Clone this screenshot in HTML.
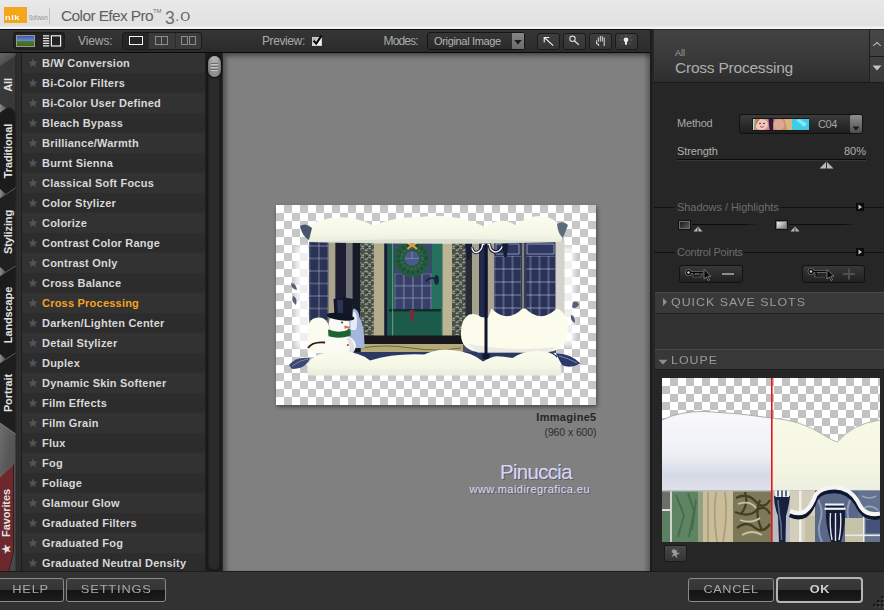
<!DOCTYPE html>
<html><head><meta charset="utf-8"><title>Color Efex Pro 3.0</title>
<style>
*{box-sizing:border-box;margin:0;padding:0}
html,body{width:884px;height:610px;overflow:hidden;background:#2b2b2b;font-family:"Liberation Sans",sans-serif;}
#app{position:relative;width:884px;height:610px;overflow:hidden;background:#2a2a2a}
.abs{position:absolute}
#title{left:0;top:0;width:884px;height:29px;background:linear-gradient(#e9e9e9,#e5e5e5 40%,#e1e1e1 88%,#f3f3f3 95%,#f3f3f3)}
#toolbar{left:0;top:29px;width:650px;height:24px;background:linear-gradient(#353535,#2b2b2b);border-top:1px solid #0c0c0c;border-bottom:1px solid #0a0a0a}
.tl{position:absolute;color:#a9a9a9;font-size:12px;line-height:14px;white-space:nowrap;letter-spacing:-0.4px}
#tabs{left:0;top:53px;width:22px;height:519px;background:#262626}
#list{left:22px;top:53px;width:183px;height:519px;background:#2e2e2e;overflow:hidden}
.row{position:absolute;left:0;width:184px;height:20px;color:#d8d8d8;font-weight:bold;font-size:11px;line-height:20px;padding-left:20px;white-space:nowrap;letter-spacing:0.22px}
.row.a{background:#323232}
.row.b{background:#2c2c2c}
.row.sel{color:#f5a31e}
.row svg{position:absolute;left:6px;top:5px}
#sb{left:205px;top:53px;width:17px;height:519px;background:#1d1d1d}
#center{left:223px;top:53px;width:427px;height:519px;background:#808080;box-shadow:inset 4px 4px 5px -1px rgba(0,0,0,.38), inset -4px 0 5px -1px rgba(0,0,0,.3)}
#right{left:652px;top:30px;width:232px;height:542px;background:#262626}
#bottom{left:0;top:571px;width:884px;height:39px;background:#323232;border-top:1px solid #1c1c1c}
.btn{position:absolute;height:24px;top:6px;border:1px solid #8a8a8a;border-radius:3px;background:linear-gradient(#3b3b3b 0,#353535 50%,#141414 52%,#1c1c1c 100%);color:#a8a8a8;font-size:11px;line-height:21px;text-align:center;white-space:nowrap}
.btn span{display:inline-block;transform-origin:50% 50%}
.rl{position:absolute;font-size:11px;line-height:13px;white-space:nowrap;color:#a8a8a8}
.tb{top:33px;width:23px;height:17px;background:linear-gradient(#3f3f3f,#353535);border:1px solid #1a1a1a;border-radius:3px}
.vt{position:absolute;left:-42.500px;width:100px;height:14px;line-height:14px;text-align:center;color:#e2e2e2;font-weight:bold;font-size:11px;transform:rotate(-90deg);transform-origin:50% 50%;white-space:nowrap;letter-spacing:-0.12px}
.cpb{top:235px;width:64px;height:18px;border:1px solid #121212;border-radius:3px;background:linear-gradient(#383838,#2c2c2c 50%,#202020)}
.wide{font-size:10.5px;letter-spacing:0.85px;color:#9a9a9a;transform:scaleX(1.18);transform-origin:0 50%}

</style></head><body>
<div id="app">

<!-- TITLE BAR -->
<div id="title" class="abs">
  <div class="abs" style="left:4px;top:7px;width:23px;height:16px;background:#f5a71c"></div>
  <div class="abs" style="left:5px;top:14px;width:21px;height:7px;color:#fff;font-size:8px;font-weight:bold;line-height:7px;letter-spacing:0.5px;transform:scaleX(1.15);transform-origin:0 0">nik</div>
  <div class="abs" style="left:29px;top:14px;color:#ababab;font-size:6.5px;line-height:8px;font-weight:bold;letter-spacing:-0.2px;transform:scaleX(0.74);transform-origin:0 0">Software</div>
  <div class="abs" style="left:49px;top:8px;width:1px;height:16px;background:#c4c4c4"></div>
  <div class="abs" id="ttl" style="left:61px;top:5.500px;color:#606060;font-size:15.5px;line-height:20px;white-space:nowrap;letter-spacing:-0.62px">Color Efex Pro</div>
  <div class="abs" style="left:153px;top:8px;color:#707070;font-size:6px;line-height:6px;letter-spacing:-0.2px">TM</div>
  <div class="abs" id="ver" style="left:165px;top:4px;color:#6e6e6e;line-height:22px;white-space:nowrap"><span style="font-size:17.5px;position:relative;top:3px">3</span><span style="font-size:14px;position:relative;left:0.5px">.</span><span style="font-size:13.5px;letter-spacing:0;position:relative;left:1px;top:-0.5px;display:inline-block;transform:scaleX(1.4);transform-origin:0 50%">0</span></div>
</div>

<!-- TOOLBAR -->
<div id="toolbar" class="abs"></div>
<!-- thumb / list toggle -->
<div class="abs" style="left:13px;top:32px;width:52px;height:18px;background:#232323;border:1px solid #1a1a1a;border-radius:3px;box-shadow:0 0 0 1px #333"></div>
<div class="abs" style="left:16px;top:35px;width:18.500px;height:11.500px;border:1px solid #9a9a8a;background:linear-gradient(#3a5ab0 0,#6a86c8 45%,#4a7a30 55%,#3a6a20 100%)"></div>
<svg class="abs" style="left:42px;top:34px" width="21" height="14" viewBox="0 0 21 14"><g stroke="#eee" stroke-width="1" fill="none"><path d="M1 1.900H7.200M1 4.400H7.200M1 6.900H7.200M1 9.400H7.200M1 11.900H7.200" stroke-width="1.1"/><rect x="9.400" y="1.800" width="9.200" height="10.200" stroke-width="1.2"/></g></svg>

<div class="tl" style="left:78px;top:34px;letter-spacing:-0.1px">Views:</div>
<div class="abs" style="left:122px;top:32px;width:80px;height:18px;background:#3a3a3a;border:1px solid #191919;border-radius:3px"></div>
<div class="abs" style="left:123px;top:33px;width:25px;height:16px;background:#262626;border-radius:2px 0 0 2px"></div>
<div class="abs" style="left:148px;top:33px;width:1px;height:16px;background:#2a2a2a"></div>
<div class="abs" style="left:175px;top:33px;width:1px;height:16px;background:#2a2a2a"></div>
<div class="abs" style="left:129px;top:36px;width:13.500px;height:9px;border:1.3px solid #f4f4f4"></div>
<svg class="abs" style="left:154px;top:35px" width="16" height="11" viewBox="0 0 16 11"><g stroke="#8c8c8c" fill="none"><rect x="1.5" y="1.5" width="12" height="8"/><path d="M7.5 1.5V10.5"/></g></svg>
<svg class="abs" style="left:180px;top:35px" width="18" height="11" viewBox="0 0 18 11"><g stroke="#8c8c8c" fill="none"><rect x="1.5" y="1.5" width="6" height="8"/><rect x="9.5" y="1.5" width="6" height="8"/></g></svg>

<div class="tl" style="left:262px;top:34px">Preview:</div>
<div class="abs" style="left:312px;top:36.500px;width:9.500px;height:9.500px;background:linear-gradient(135deg,#9a9a9a,#f2f2f2 60%);border:1px solid #cfcfcf"></div>
<svg class="abs" style="left:311px;top:33px" width="14" height="14" viewBox="0 0 14 14"><path d="M2.6 7.6 L5.2 10.6 L10.6 2.6" stroke="#050505" stroke-width="2.1" fill="none"/></svg>

<div class="tl" style="left:383.500px;top:34px;letter-spacing:-0.85px">Modes:</div>
<div class="abs" style="left:427px;top:32px;width:98px;height:18px;background:linear-gradient(#363636,#2a2a2a);border:1px solid #151515;border-radius:3px"></div>
<div class="tl" id="orig" style="left:434px;top:34px;color:#b4b4b4;font-size:11px;letter-spacing:-0.33px">Original Image</div>
<div class="abs" style="left:512px;top:33px;width:12px;height:16px;background:linear-gradient(#868686,#6c6c6c);border-radius:1px"></div>
<svg class="abs" style="left:512px;top:33px" width="12" height="16" viewBox="0 0 12 16"><path d="M2.2 7 H9.8 L6 11.4 Z" fill="#1c1c1c"/></svg>

<!-- tool buttons -->
<div class="abs tb" style="left:536.500px"></div>
<div class="abs tb" style="left:562.500px"></div>
<div class="abs tb" style="left:588.500px"></div>
<div class="abs tb" style="left:614.500px"></div>
<svg class="abs" style="left:537px;top:33px" width="23" height="17" viewBox="0 0 23 17"><path d="M16.200 12.700 L7.300 4.500 M7.200 9.500 V4.400 H12.300" stroke="#f4f4f4" stroke-width="1.05" fill="none"/></svg>
<svg class="abs" style="left:563px;top:33px" width="23" height="17" viewBox="0 0 23 17"><circle cx="9.500" cy="5.800" r="2.700" stroke="#d8d8d8" stroke-width="1.1" fill="none"/><path d="M11.600 7.900 L15.800 11.700" stroke="#d8d8d8" stroke-width="1.4"/></svg>
<svg class="abs" style="left:589px;top:33px" width="23" height="17" viewBox="0 0 23 17"><path d="M9.300 4.500V8.800 M11.300 3V8.500 M13.300 3.300V8.500 M15.200 4.500V13 M7.600 7.500 V11 H9.600 V13" stroke="#e0e0e0" stroke-width="1" fill="none"/></svg>
<svg class="abs" style="left:615px;top:33px" width="23" height="17" viewBox="0 0 23 17"><circle cx="11" cy="6.800" r="2.400" fill="#ececec"/><rect x="10" y="8.300" width="2" height="3.400" fill="#ececec"/><path d="M11 1.200V2.800M6.400 3L7.500 4.100M15.600 3L14.500 4.100M4.800 7H6.500M15.500 7H17.200M6.600 11.200L7.600 10.300M15.400 11.200L14.400 10.300" stroke="#7a7a7a" stroke-width="0.9"/></svg>

<!-- LEFT TABS -->
<div id="tabs" class="abs">
<svg width="22" height="519" viewBox="0 53 22 519">
  <defs>
    <linearGradient id="tg" x1="0" y1="0" x2="1" y2="1"><stop offset="0" stop-color="#666"/><stop offset="1" stop-color="#3c3c3c"/></linearGradient>
    <linearGradient id="gg" x1="0" y1="0" x2="0.6" y2="1"><stop offset="0" stop-color="#6e6e6e"/><stop offset="0.4" stop-color="#585858"/><stop offset="1" stop-color="#484848"/></linearGradient>
    <linearGradient id="tri" x1="0" y1="0" x2="1" y2="0"><stop offset="0" stop-color="#8a8a8a"/><stop offset="1" stop-color="#555"/></linearGradient>
  </defs>
  <rect x="0" y="53" width="15.500" height="519" fill="#383838"/>
  <rect x="15.500" y="53" width="6.500" height="519" fill="#2e2e2e"/>
  <rect x="15.500" y="53" width="1" height="519" fill="#262626"/>
  <rect x="21" y="53" width="1" height="519" fill="#1e1e1e"/>
  <!-- All (active) highlight -->
  <path d="M0 53 H15.500 V56 L0 66Z" fill="url(#tg)"/>
  <!-- Traditional -->
  <path d="M0 112.500 L6.500 108 Q13.500 105.500 15.500 115 V200 H0Z" fill="#1b1b1b"/>
  <path d="M0 104 L6.500 108 L0 112.500Z" fill="url(#tri)"/>
  <!-- Stylizing -->
  <path d="M0 198 L15.500 188 V280 H0Z" fill="#202020"/>
  <path d="M0 198 L15.500 188" stroke="#5c5c5c" stroke-width="1"/>
  <path d="M0 189 L5.500 193.800 L0 198Z" fill="url(#tri)"/>
  <!-- Landscape -->
  <path d="M0 276 L15.500 266 V370 H0Z" fill="#1b1b1b"/>
  <path d="M0 276 L15.500 266" stroke="#5c5c5c" stroke-width="1"/>
  <path d="M0 267 L5.500 271.800 L0 276Z" fill="url(#tri)"/>
  <!-- Portrait -->
  <path d="M0 363 L15.500 353 V434 L0 423Z" fill="#1e1e1e"/>
  <path d="M0 363 L15.500 353" stroke="#5c5c5c" stroke-width="1"/>
  <path d="M0 354 L5.500 358.800 L0 363Z" fill="url(#tri)"/>
  <!-- grey gap -->
  <path d="M0 423 L15.500 434 V572 H0Z" fill="url(#gg)"/>
  <path d="M0 423 L15.500 434" stroke="#8a8a8a" stroke-width="0.8"/>
  <!-- Favorites -->
  <path d="M0 477 L13.500 464.500 V552 L8.500 572 H0Z" fill="#6b282d"/>
  <path d="M0 477 L13.500 464.500" stroke="#8a5a5e" stroke-width="0.8"/>
  <path d="M13.500 464.500 V552 L8.500 572" stroke="#3a1a1c" stroke-width="1" fill="none"/>
</svg>
<div class="vt" style="top:25px">All</div>
<div class="vt" style="top:90.500px">Traditional</div>
<div class="vt" style="top:171.800px">Stylizing</div>
<div class="vt" style="top:254.500px">Landscape</div>
<div class="vt" style="top:333.400px">Portrait</div>
<div class="vt" style="top:452.600px;left:-44.500px">Favorites</div>
<div class="vt" style="top:488.600px;font-size:10.5px;left:-44.500px">★</div>
</div>

<!-- LIST -->
<div id="list" class="abs">
<div class="row a" style="top:0px"><svg width="10" height="10" viewBox="0 0 11 11"><path d="M5.5 0.3 L6.9 3.9 L10.7 4.1 L7.7 6.5 L8.7 10.3 L5.5 8.2 L2.3 10.3 L3.3 6.5 L0.3 4.1 L4.1 3.9 Z" fill="#535353"/></svg>B/W Conversion</div>
<div class="row b" style="top:20px"><svg width="10" height="10" viewBox="0 0 11 11"><path d="M5.5 0.3 L6.9 3.9 L10.7 4.1 L7.7 6.5 L8.7 10.3 L5.5 8.2 L2.3 10.3 L3.3 6.5 L0.3 4.1 L4.1 3.9 Z" fill="#535353"/></svg>Bi-Color Filters</div>
<div class="row a" style="top:40px"><svg width="10" height="10" viewBox="0 0 11 11"><path d="M5.5 0.3 L6.9 3.9 L10.7 4.1 L7.7 6.5 L8.7 10.3 L5.5 8.2 L2.3 10.3 L3.3 6.5 L0.3 4.1 L4.1 3.9 Z" fill="#535353"/></svg>Bi-Color User Defined</div>
<div class="row b" style="top:60px"><svg width="10" height="10" viewBox="0 0 11 11"><path d="M5.5 0.3 L6.9 3.9 L10.7 4.1 L7.7 6.5 L8.7 10.3 L5.5 8.2 L2.3 10.3 L3.3 6.5 L0.3 4.1 L4.1 3.9 Z" fill="#535353"/></svg>Bleach Bypass</div>
<div class="row a" style="top:80px"><svg width="10" height="10" viewBox="0 0 11 11"><path d="M5.5 0.3 L6.9 3.9 L10.7 4.1 L7.7 6.5 L8.7 10.3 L5.5 8.2 L2.3 10.3 L3.3 6.5 L0.3 4.1 L4.1 3.9 Z" fill="#535353"/></svg>Brilliance/Warmth</div>
<div class="row b" style="top:100px"><svg width="10" height="10" viewBox="0 0 11 11"><path d="M5.5 0.3 L6.9 3.9 L10.7 4.1 L7.7 6.5 L8.7 10.3 L5.5 8.2 L2.3 10.3 L3.3 6.5 L0.3 4.1 L4.1 3.9 Z" fill="#535353"/></svg>Burnt Sienna</div>
<div class="row a" style="top:120px"><svg width="10" height="10" viewBox="0 0 11 11"><path d="M5.5 0.3 L6.9 3.9 L10.7 4.1 L7.7 6.5 L8.7 10.3 L5.5 8.2 L2.3 10.3 L3.3 6.5 L0.3 4.1 L4.1 3.9 Z" fill="#535353"/></svg>Classical Soft Focus</div>
<div class="row b" style="top:140px"><svg width="10" height="10" viewBox="0 0 11 11"><path d="M5.5 0.3 L6.9 3.9 L10.7 4.1 L7.7 6.5 L8.7 10.3 L5.5 8.2 L2.3 10.3 L3.3 6.5 L0.3 4.1 L4.1 3.9 Z" fill="#535353"/></svg>Color Stylizer</div>
<div class="row a" style="top:160px"><svg width="10" height="10" viewBox="0 0 11 11"><path d="M5.5 0.3 L6.9 3.9 L10.7 4.1 L7.7 6.5 L8.7 10.3 L5.5 8.2 L2.3 10.3 L3.3 6.5 L0.3 4.1 L4.1 3.9 Z" fill="#535353"/></svg>Colorize</div>
<div class="row b" style="top:180px"><svg width="10" height="10" viewBox="0 0 11 11"><path d="M5.5 0.3 L6.9 3.9 L10.7 4.1 L7.7 6.5 L8.7 10.3 L5.5 8.2 L2.3 10.3 L3.3 6.5 L0.3 4.1 L4.1 3.9 Z" fill="#535353"/></svg>Contrast Color Range</div>
<div class="row a" style="top:200px"><svg width="10" height="10" viewBox="0 0 11 11"><path d="M5.5 0.3 L6.9 3.9 L10.7 4.1 L7.7 6.5 L8.7 10.3 L5.5 8.2 L2.3 10.3 L3.3 6.5 L0.3 4.1 L4.1 3.9 Z" fill="#535353"/></svg>Contrast Only</div>
<div class="row b" style="top:220px"><svg width="10" height="10" viewBox="0 0 11 11"><path d="M5.5 0.3 L6.9 3.9 L10.7 4.1 L7.7 6.5 L8.7 10.3 L5.5 8.2 L2.3 10.3 L3.3 6.5 L0.3 4.1 L4.1 3.9 Z" fill="#535353"/></svg>Cross Balance</div>
<div class="row a sel" style="top:240px"><svg width="10" height="10" viewBox="0 0 11 11"><path d="M5.5 0.3 L6.9 3.9 L10.7 4.1 L7.7 6.5 L8.7 10.3 L5.5 8.2 L2.3 10.3 L3.3 6.5 L0.3 4.1 L4.1 3.9 Z" fill="#535353"/></svg>Cross Processing</div>
<div class="row b" style="top:260px"><svg width="10" height="10" viewBox="0 0 11 11"><path d="M5.5 0.3 L6.9 3.9 L10.7 4.1 L7.7 6.5 L8.7 10.3 L5.5 8.2 L2.3 10.3 L3.3 6.5 L0.3 4.1 L4.1 3.9 Z" fill="#535353"/></svg>Darken/Lighten Center</div>
<div class="row a" style="top:280px"><svg width="10" height="10" viewBox="0 0 11 11"><path d="M5.5 0.3 L6.9 3.9 L10.7 4.1 L7.7 6.5 L8.7 10.3 L5.5 8.2 L2.3 10.3 L3.3 6.5 L0.3 4.1 L4.1 3.9 Z" fill="#535353"/></svg>Detail Stylizer</div>
<div class="row b" style="top:300px"><svg width="10" height="10" viewBox="0 0 11 11"><path d="M5.5 0.3 L6.9 3.9 L10.7 4.1 L7.7 6.5 L8.7 10.3 L5.5 8.2 L2.3 10.3 L3.3 6.5 L0.3 4.1 L4.1 3.9 Z" fill="#535353"/></svg>Duplex</div>
<div class="row a" style="top:320px"><svg width="10" height="10" viewBox="0 0 11 11"><path d="M5.5 0.3 L6.9 3.9 L10.7 4.1 L7.7 6.5 L8.7 10.3 L5.5 8.2 L2.3 10.3 L3.3 6.5 L0.3 4.1 L4.1 3.9 Z" fill="#535353"/></svg>Dynamic Skin Softener</div>
<div class="row b" style="top:340px"><svg width="10" height="10" viewBox="0 0 11 11"><path d="M5.5 0.3 L6.9 3.9 L10.7 4.1 L7.7 6.5 L8.7 10.3 L5.5 8.2 L2.3 10.3 L3.3 6.5 L0.3 4.1 L4.1 3.9 Z" fill="#535353"/></svg>Film Effects</div>
<div class="row a" style="top:360px"><svg width="10" height="10" viewBox="0 0 11 11"><path d="M5.5 0.3 L6.9 3.9 L10.7 4.1 L7.7 6.5 L8.7 10.3 L5.5 8.2 L2.3 10.3 L3.3 6.5 L0.3 4.1 L4.1 3.9 Z" fill="#535353"/></svg>Film Grain</div>
<div class="row b" style="top:380px"><svg width="10" height="10" viewBox="0 0 11 11"><path d="M5.5 0.3 L6.9 3.9 L10.7 4.1 L7.7 6.5 L8.7 10.3 L5.5 8.2 L2.3 10.3 L3.3 6.5 L0.3 4.1 L4.1 3.9 Z" fill="#535353"/></svg>Flux</div>
<div class="row a" style="top:400px"><svg width="10" height="10" viewBox="0 0 11 11"><path d="M5.5 0.3 L6.9 3.9 L10.7 4.1 L7.7 6.5 L8.7 10.3 L5.5 8.2 L2.3 10.3 L3.3 6.5 L0.3 4.1 L4.1 3.9 Z" fill="#535353"/></svg>Fog</div>
<div class="row b" style="top:420px"><svg width="10" height="10" viewBox="0 0 11 11"><path d="M5.5 0.3 L6.9 3.9 L10.7 4.1 L7.7 6.5 L8.7 10.3 L5.5 8.2 L2.3 10.3 L3.3 6.5 L0.3 4.1 L4.1 3.9 Z" fill="#535353"/></svg>Foliage</div>
<div class="row a" style="top:440px"><svg width="10" height="10" viewBox="0 0 11 11"><path d="M5.5 0.3 L6.9 3.9 L10.7 4.1 L7.7 6.5 L8.7 10.3 L5.5 8.2 L2.3 10.3 L3.3 6.5 L0.3 4.1 L4.1 3.9 Z" fill="#535353"/></svg>Glamour Glow</div>
<div class="row b" style="top:460px"><svg width="10" height="10" viewBox="0 0 11 11"><path d="M5.5 0.3 L6.9 3.9 L10.7 4.1 L7.7 6.5 L8.7 10.3 L5.5 8.2 L2.3 10.3 L3.3 6.5 L0.3 4.1 L4.1 3.9 Z" fill="#535353"/></svg>Graduated Filters</div>
<div class="row a" style="top:480px"><svg width="10" height="10" viewBox="0 0 11 11"><path d="M5.5 0.3 L6.9 3.9 L10.7 4.1 L7.7 6.5 L8.7 10.3 L5.5 8.2 L2.3 10.3 L3.3 6.5 L0.3 4.1 L4.1 3.9 Z" fill="#535353"/></svg>Graduated Fog</div>
<div class="row b" style="top:500px"><svg width="10" height="10" viewBox="0 0 11 11"><path d="M5.5 0.3 L6.9 3.9 L10.7 4.1 L7.7 6.5 L8.7 10.3 L5.5 8.2 L2.3 10.3 L3.3 6.5 L0.3 4.1 L4.1 3.9 Z" fill="#535353"/></svg>Graduated Neutral Density</div>

</div>
<div id="sb" class="abs">
  <div class="abs" style="left:2px;top:0;width:14px;height:518px;background:#2a2a2a;border-radius:6px;border:1px solid #161616;box-shadow:inset 0 0 2px #111"></div>
  <div class="abs" style="left:3px;top:3px;width:13px;height:21px;border-radius:6.5px;background:linear-gradient(90deg,rgba(0,0,0,.25),rgba(0,0,0,0) 30%,rgba(0,0,0,0) 70%,rgba(0,0,0,.25)),linear-gradient(#b2b2b2,#a0a0a0 50%,#8a8a8a);box-shadow:0 0 2px 1px #0c0c0c"></div>
  <div class="abs" style="left:6px;top:10px;width:7px;height:1px;background:#6a6a6a;box-shadow:0 1px 0 #c4c4c4,0 3px 0 #6a6a6a,0 4px 0 #c4c4c4,0 6px 0 #6a6a6a,0 7px 0 #c4c4c4"></div>
</div>

<!-- CENTER -->
<div id="center" class="abs"></div>
<div class="abs" style="left:276px;top:205px;width:320px;height:200px;box-shadow:1px 2px 4px rgba(0,0,0,.45)">
<svg width="320" height="200" viewBox="276 205 320 200" style="display:block">
<defs>
  <pattern id="chk" x="276" y="205" width="16" height="16" patternUnits="userSpaceOnUse"><rect width="16" height="16" fill="#ffffff"/><rect x="8" width="8" height="8" fill="#c7c7c7"/><rect y="8" width="8" height="8" fill="#c7c7c7"/></pattern>
  <pattern id="win" width="9.4" height="12.5" patternUnits="userSpaceOnUse" x="309.5" y="246"><rect width="9.400" height="12.500" fill="#74809e"/><rect x="0.500" y="0.500" width="8.400" height="11.500" rx="0.800" fill="#2b3355"/></pattern>
  <pattern id="win2" width="9" height="13" patternUnits="userSpaceOnUse" x="494.5" y="256"><rect width="9" height="13" fill="#8088aa"/><rect x="0.500" y="0.500" width="8" height="12" rx="0.800" fill="#2a3359"/></pattern>
  <pattern id="win3" width="9.100" height="12.300" patternUnits="userSpaceOnUse" x="394.700" y="273.500"><rect width="9.100" height="12.300" fill="#8088a8"/><rect x="0.500" y="0.500" width="8.100" height="11.300" rx="0.800" fill="#39416a"/></pattern>
  <linearGradient id="snw" x1="0" y1="0" x2="0" y2="1"><stop offset="0" stop-color="#fbfcee"/><stop offset="0.6" stop-color="#f6f8e6"/><stop offset="1" stop-color="#e8ebdc"/></linearGradient>
  <pattern id="leaf" width="7" height="9" patternUnits="userSpaceOnUse"><rect width="7" height="9" fill="#4a5046"/><path d="M0.500 2 q2 -2 3.500 0.500 M3 6 q2 -2 4 0 M1 8 q1 -2 2.500 -0.500 M4.500 3.500 q1.500 -1 2.500 0.500" stroke="#a2a896" stroke-width="1.100" fill="none"/><path d="M2 4.500 q1 1 2 0" stroke="#20241e" stroke-width="1" fill="none"/></pattern>
  <filter id="b1"><feGaussianBlur stdDeviation="0.7"/></filter>
  <filter id="b2"><feGaussianBlur stdDeviation="2.2"/></filter>
</defs>
<rect x="276" y="205" width="320" height="200" fill="url(#chk)"/>
<!-- frosted sides -->
<g filter="url(#b2)" fill="#ffffff" opacity="0.72"><rect x="295" y="246" width="17" height="102"/><rect x="560" y="246" width="15" height="100"/></g>
<g filter="url(#b1)">
<!-- scene body -->
<rect x="309" y="241" width="247" height="112" fill="#4a5070"/>
<rect x="309" y="241" width="19" height="112" fill="url(#win)"/>
<rect x="328.500" y="241" width="7" height="112" fill="#aaa58a"/>
<rect x="335.500" y="241" width="10.500" height="112" fill="#1b1d33"/>
<rect x="346" y="241" width="6.700" height="112" fill="#727478"/>
<rect x="352.700" y="241" width="7.700" height="112" fill="#181a26"/>
<rect x="360.400" y="241" width="13.400" height="100" fill="url(#leaf)"/>
<rect x="373.800" y="241" width="10.600" height="100" fill="#b2ab8c"/>
<!-- door -->
<rect x="384.400" y="241" width="3" height="100" fill="#171b30"/>
<rect x="387.400" y="241" width="55" height="96" fill="#1b5a49"/>
<rect x="432" y="241" width="10.400" height="96" fill="#25705f"/>
<rect x="394.400" y="243" width="37.400" height="31" fill="#3d4771"/>
<rect x="394.400" y="273.500" width="37.400" height="36.500" fill="url(#win3)"/>
<rect x="389" y="310" width="52" height="26" fill="#1c5a4a"/>
<rect x="389" y="309" width="52" height="2.500" fill="#102e2a"/>
<circle cx="412" cy="258.500" r="7.500" fill="#4c5a8c"/>
<circle cx="412" cy="258.500" r="12.800" fill="none" stroke="#285a40" stroke-width="11"/>
<circle cx="412" cy="258.500" r="14" fill="none" stroke="#1c4a34" stroke-width="3" stroke-dasharray="2 3"/>
<circle cx="412" cy="258.500" r="10.500" fill="none" stroke="#347050" stroke-width="2" stroke-dasharray="1.5 2.5"/>
<path d="M412 258.500 v-7 M405 258.500 h14" stroke="#8088b0" stroke-width="0.800"/>
<path d="M406 241.500 L412 246 L418 241.500 M407.500 249 L412 245 L417 249" stroke="#ea9a44" stroke-width="1.900" fill="none"/>
<path d="M409.500 310 H414.500 L413 322 H411Z" fill="#7a2a34"/>
<ellipse cx="436.500" cy="280" rx="2.300" ry="4.800" fill="#1a2040"/>
<path d="M436 278.500 q-7 -1.500 -10 3" stroke="#1a2040" stroke-width="1.600" fill="none"/>
<rect x="392" y="241" width="1.200" height="100" fill="#9cc0b8" opacity="0.550"/>
<!-- right of door -->
<rect x="442.500" y="241" width="9.500" height="100" fill="#bcb594"/>
<rect x="452" y="241" width="13.600" height="100" fill="url(#leaf)"/>
<rect x="465.600" y="241" width="6.400" height="100" fill="#2a2c34"/>
<rect x="472" y="241" width="7" height="100" fill="#a7a28c"/>
<rect x="479" y="241" width="8.700" height="100" fill="#232a4c"/>
<rect x="487.700" y="241" width="6.700" height="100" fill="#aaa58c"/>
<rect x="494.400" y="241" width="26.500" height="80" fill="#2d3760"/>
<rect x="494.400" y="256" width="26.500" height="65" fill="url(#win2)"/>
<rect x="520.900" y="241" width="4.300" height="80" fill="#3a3e50"/><rect x="522.300" y="241" width="1.500" height="80" fill="#9a9684"/>
<rect x="525.200" y="241" width="31" height="80" fill="#2d3760"/>
<rect x="526.500" y="256" width="29" height="65" fill="url(#win2)"/>
<rect x="555.500" y="241" width="9" height="80" fill="#d4d4cc"/>
<path d="M496 244 h23 v10 h-23z M527 244 h27 v10 h-27z" fill="none" stroke="#8a96b4" stroke-width="1"/>
<!-- lamp top curls -->
<path d="M471.500 247 Q473 254 478 252 Q482 250 482.500 244.500 H489.500 Q490 251 495 252 Q500 252 502.500 246" stroke="#10142c" stroke-width="3.400" fill="none"/>
<path d="M471.500 247 Q473 254 478 252 Q482 250 482.500 244.500 H489.500 Q490 251 495 252 Q500 252 502.500 246" stroke="#eef0f4" stroke-width="1.500" fill="none"/>
<path d="M465 242.500 h7 l-1.800 17 h-3z M502 243.500 h6.500 l-1.800 13.500 h-2.800z" fill="#161b36"/>
<!-- porch -->
<rect x="360" y="335.500" width="103" height="9" fill="#14161e"/>
<rect x="361" y="344" width="102" height="9" fill="#b3aa78"/>
<path d="M361 348 q25 -4 50 0 t50 0" stroke="#6f6a48" stroke-width="1.200" fill="none"/>
<!-- navy shadow -->
<path d="M352 352 H552 L557 356 V364 H352Z" fill="#2b3762"/>
<!-- behind-snowman blue figure -->
<path d="M349 348 V320 q0 -8 5 -11.500 q5 2 5.500 9 q5 8 5 30.500Z" fill="#a4b6dc"/>
<path d="M350.500 330 V320 q1 -6 3.500 -9 q3 3 3 10 q0 6 -1 9Z" fill="#e8ecf6"/>
<!-- right snow mound -->
<path d="M461 332 Q461 319 469 314.500 Q476 312.500 481 317 L488 318 L491.500 308.500 Q507 324 522.500 308.500 L525.500 308.500 Q541 324 556.500 308.500 Q566 311 568 326 Q568 350 548 352 H478 Q460 350 461 332Z" fill="#fbfcec"/>
<path d="M468 344 Q510 352 556 347 L548 353 H478Z" fill="#dfe3e0" opacity="0.7"/>
<!-- lamp post -->
<rect x="484.500" y="243" width="3" height="116" fill="#10142c"/>
<rect x="482.500" y="354" width="7" height="5" fill="#10142c"/>
<!-- left snow pile -->
<path d="M307.500 353 V329 Q309 317.500 319 317.500 Q329 318 330 332 V353Z" fill="#fbfcee"/>
<!-- snowman -->
<ellipse cx="339" cy="346" rx="16.800" ry="11.500" fill="#fafbf2"/>
<path d="M350 338 Q356 344 354 354 L348 356 Q352 346 346 338Z" fill="#c8ccd4" opacity="0.550"/>
<circle cx="339" cy="324" r="10.300" fill="#f9faf4"/>
<path d="M328 329.500 Q339 334 350.500 329 L350.800 335.500 Q339 339.500 328.500 336.200Z" fill="#1c6432"/>
<path d="M344.500 325.500 l6 1.700 l-6 1.600z" fill="#ef5a28"/>
<circle cx="342" cy="322.500" r="0.900" fill="#223"/>
<circle cx="347.800" cy="345" r="1" fill="#e01830"/>
<path d="M333.500 299 Q343 296 353 299 L352.500 316 Q343 318 334.500 316Z" fill="#14182c"/>
<path d="M337 300 Q340 299 343 300 L343 314 L338 314Z" fill="#36406a" opacity="0.700"/>
<ellipse cx="340.500" cy="316.800" rx="14" ry="3.600" fill="#0f1224" transform="rotate(7 340.500 316.800)"/>
<path d="M308 348 Q312 341.500 325 342.500" stroke="#2a1c1c" stroke-width="1.800" fill="none"/>
<!-- top snow -->
<path d="M309 242 Q307 226 317 221.500 Q334 215.500 352 218 Q366 221 373 226 Q392 217 420 217 Q448 214 470 221 Q480 224 486 228 Q494 219 504 221 Q512 222 517 226 Q524 216 540 216 Q556 217 560 228 Q564 236 561 242 Q440 245 309 242Z" fill="url(#snw)"/>
<path d="M309 242 Q440 236 561 242 Q440 245 309 242Z" fill="#d8dcd0" opacity="0.8"/>
<!-- bottom snow -->
<path d="M307.500 375.500 V365 Q312 352 341 351 Q360 352 370 360.500 Q394 353 424 354.500 Q440 348 452 350 Q472 352 483 361.500 Q494 355 500 356.500 Q508 357 512.500 358 Q524 350 540 351 Q556 352 559 362 Q562 368 561 375.500Z" fill="url(#snw)"/>
<!-- leaves -->
<path d="M289 365 Q296 356 310 358 Q306 369 292 369Z" fill="#3b4670"/>
<path d="M292 366 Q300 360 308 359" stroke="#8e98b8" stroke-width="0.800" fill="none"/>
<path d="M556 353.500 Q570 353 580.500 363.500 Q570 369 562 365 Q559 360 556 353.500Z" fill="#2c376a"/><path d="M559 356 Q568 358 577 363" stroke="#8c98b8" stroke-width="0.800" fill="none"/>
<path d="M300 226 Q306 222 312 228 L309 240 Q302 236 300 226Z" fill="#4a5468"/>
<path d="M557 224 Q563 220 568 225 L563 238 Q558 234 557 224Z" fill="#5c6a7e"/>
<path d="M291 283 q5 0 6 7 q-6 -1 -6 -7z M293 296 q5 2 3 9 q-5 -3 -3 -9z" fill="#55607e"/>
<path d="M573 302 q5 -2 6 3 q-4 5 -7 2z M571 315 q4 0 4 8 q-5 -2 -4 -8z" fill="#55607e"/>
</g>
</svg>

</div>
<div class="abs" style="left:440px;top:410px;width:156.500px;text-align:right;color:#262626;font-size:11px;font-weight:bold;line-height:14px;letter-spacing:0.3px;white-space:nowrap">Immagine5</div>
<div class="abs" style="left:440px;top:426px;width:156.500px;text-align:right;color:#2c2c2c;font-size:10.5px;line-height:12px;letter-spacing:-0.1px;white-space:nowrap">(960 x 600)</div>
<div class="abs" id="pin" style="left:500px;top:460px;color:#d6d2f0;font-size:20.5px;line-height:24px;letter-spacing:-0.7px;white-space:nowrap;text-shadow:1px 1px 0 #5a5a6a,0 0 0.6px #d6d2f0">Pinuccia</div>
<div class="abs" id="www" style="left:469.500px;top:482.500px;color:#dedaf2;font-size:11px;line-height:13px;letter-spacing:0.47px;white-space:nowrap;text-shadow:1px 1px 0 #5a5a6a">www.maidiregrafica.eu</div>

<!-- RIGHT PANEL -->
<div class="abs" style="left:650px;top:29px;width:4px;height:543px;background:#1c1c1c"></div>
<div id="right" class="abs">
  <div class="abs" style="left:2px;top:0;width:230px;height:53px;background:linear-gradient(#424242,#3a3a3a 50%,#2e2e2e);border-bottom:1px solid #1a1a1a"></div>
  <div class="abs" style="left:217px;top:0;width:15px;height:52px;background:linear-gradient(#464646,#3a3a3a);border-left:1px solid #1e1e1e"></div>
  <div class="abs" style="left:218px;top:26px;width:14px;height:1px;background:#1c1c1c"></div>
  <svg class="abs" style="left:218px;top:0" width="14" height="52" viewBox="0 0 14 52"><path d="M2.6 16 L7 11.8 L11.4 16 L10.2 16 L7 13.2 L3.8 16Z" fill="#c4c4c4"/><path d="M2.5 35.5 H11.5 L7 40.5Z" fill="#c4c4c4"/></svg>
  <div class="rl" style="left:23px;top:18px;font-size:9px;color:#a0a0a0;line-height:10px">All</div>
  <div class="rl" id="cp" style="left:23px;top:28px;font-size:15.5px;line-height:20px;color:#adadad;letter-spacing:-0.22px">Cross Processing</div>

  <div class="rl" style="left:25px;top:87px;letter-spacing:-0.2px">Method</div>
  <div class="abs" style="left:87px;top:84px;width:124px;height:20px;border:1px solid #111;border-radius:3px;background:linear-gradient(#3c3c3c,#2c2c2c 50%,#1e1e1e)"></div>
  <svg class="abs" style="left:99.500px;top:87.500px" width="57.500" height="13" viewBox="0 0 57.5 13">
    <defs><filter id="tb"><feGaussianBlur stdDeviation="0.7"/></filter></defs>
    <rect width="57.500" height="13" fill="#181818"/>
    <g filter="url(#tb)">
    <rect x="1" y="1" width="39" height="11" fill="#c89078"/>
    <rect x="40" y="1" width="17" height="11" fill="#3ccde6"/>
    <rect x="1" y="1" width="1.500" height="11" fill="#a8e4f0"/>
    <ellipse cx="9.500" cy="6.500" rx="6.500" ry="5.500" fill="#f2c6c0"/>
    <path d="M3 1 H8 L4 7 L3 12 H2Z" fill="#c08a4a"/>
    <path d="M16.500 1 H21.500 L21 12 H17.500Z" fill="#34183a"/>
    <ellipse cx="27" cy="6.500" rx="5.500" ry="5.500" fill="#dca890"/>
    <path d="M32.500 1 H40 V12 H35Z" fill="#d8b67c"/>
    <path d="M44 2 L52 9 L55 6 L48 1Z" fill="#8ce4f4"/>
    <circle cx="8" cy="5.500" r="0.800" fill="#3a2020"/><circle cx="12" cy="5.500" r="0.800" fill="#3a2020"/>
    <path d="M8 8.500 q2 1.500 4 0" stroke="#b84050" stroke-width="0.900" fill="none"/>
    </g>
  </svg>
  <div class="rl" style="left:166px;top:88px;color:#a4a4a4;letter-spacing:-0.4px">C04</div>
  <div class="abs" style="left:198px;top:85px;width:12px;height:18px;background:linear-gradient(#8e8e8e,#6a6a6a 60%,#4c4c4c);border-radius:2px"></div>
  <svg class="abs" style="left:198px;top:85px" width="12" height="18" viewBox="0 0 12 18"><path d="M2.5 11.5 H9.5 L6 15.5Z" fill="#1a1a1a"/></svg>

  <div class="rl" style="left:25px;top:115px;letter-spacing:-0.1px;color:#b0b0b0">Strength</div>
  <div class="rl" style="left:192px;top:115px;color:#b0b0b0">80%</div>
  <div class="abs" style="left:25px;top:129px;width:189px;height:1px;background:#0c0c0c"></div>
  <div class="abs" style="left:25px;top:130px;width:189px;height:1px;background:#363636"></div>
  <svg class="abs" style="left:167px;top:131px" width="15" height="8" viewBox="0 0 15 8"><path d="M0.5 7.5 L7.5 0.5 L14.5 7.5Z" fill="#b8b8b8"/><path d="M7.5 1V8" stroke="#333" stroke-width="1"/></svg>

  <div class="abs" style="left:2px;top:177px;width:230px;height:1px;background:#111"></div>
  <div class="rl" style="left:23px;top:171px;color:#6c6c6c;background:#262626;padding:0 0 0 2px;letter-spacing:-0.05px">Shadows / Highlights</div>
  <div class="abs" style="left:204px;top:173px;width:8px;height:8px;background:#0a0a0a"></div>
  <svg class="abs" style="left:204px;top:173px" width="8" height="8" viewBox="0 0 8 8"><path d="M2.5 1.5 L6 4 L2.5 6.5Z" fill="#c8c8c8"/></svg>
  <div class="abs" style="left:27px;top:191px;width:11px;height:8px;border:1px solid #6a6a6a;outline:1px solid #111;background:linear-gradient(135deg,#1a1a1a,#5a5a5a)"></div>
  <div class="abs" style="left:40px;top:194px;width:66px;height:1px;background:linear-gradient(90deg,#0c0c0c 80%,#262626)"></div>
  <svg class="abs" style="left:41px;top:196px" width="10" height="6" viewBox="0 0 10 6"><path d="M0.5 5.5 L5 0.5 L9.5 5.5Z" fill="#b8b8b8"/><path d="M5 1.5V6" stroke="#333" stroke-width="1"/></svg>
  <div class="abs" style="left:124px;top:191px;width:11px;height:8px;border:1px solid #777;outline:1px solid #111;background:linear-gradient(135deg,#f0f0f0,#7a7a7a)"></div>
  <div class="abs" style="left:137px;top:194px;width:67px;height:1px;background:linear-gradient(90deg,#0c0c0c 80%,#262626)"></div>
  <svg class="abs" style="left:138px;top:196px" width="10" height="6" viewBox="0 0 10 6"><path d="M0.5 5.5 L5 0.5 L9.5 5.5Z" fill="#b8b8b8"/><path d="M5 1.5V6" stroke="#333" stroke-width="1"/></svg>

  <div class="abs" style="left:2px;top:222px;width:230px;height:1px;background:#111"></div>
  <div class="rl" style="left:23px;top:216px;color:#6c6c6c;background:#262626;padding:0 1px 0 2px;letter-spacing:-0.25px">Control Points</div>
  <div class="abs" style="left:204px;top:218px;width:8px;height:8px;background:#0a0a0a"></div>
  <svg class="abs" style="left:204px;top:218px" width="8" height="8" viewBox="0 0 8 8"><path d="M2.5 1.5 L6 4 L2.5 6.5Z" fill="#c8c8c8"/></svg>

  <div class="abs cpb" style="left:27px"></div>
  <div class="abs cpb" style="left:150px;width:63px"></div>
  <svg class="abs" style="left:27px;top:235px" width="64" height="18" viewBox="0 0 64 18"><g stroke="#8a8a8a" fill="none" stroke-width="2.6"><circle cx="9.5" cy="7.5" r="2"/><path d="M11.5 7.500H24M15 7.500V11H21V7.500"/></g><g stroke="#050505" fill="none" stroke-width="1.3"><circle cx="9.5" cy="7.5" r="2" fill="#ccc"/><path d="M11.5 7.500H24M15 7.500V11H21V7.500"/></g><path d="M25 4.500 V14 L27.300 12 L29 15.500 L30.600 14.800 L28.800 11.400 L32 11.200Z" fill="#050505" stroke="#9a9a9a" stroke-width="0.7"/><rect x="43" y="8" width="12" height="2" fill="#8e8e8e"/></svg>
  <svg class="abs" style="left:150px;top:235px" width="64" height="18" viewBox="0 0 64 18"><g stroke="#8a8a8a" fill="none" stroke-width="2.6"><circle cx="9" cy="6.5" r="2"/><path d="M11 6.500H24M14 6.500V11H23M14 9H23"/></g><g stroke="#050505" fill="none" stroke-width="1.3"><circle cx="9" cy="6.5" r="2" fill="#ccc"/><path d="M11 6.500H24M14 6.500V11H23M14 9H23"/></g><path d="M25 4.500 V14 L27.300 12 L29 15.500 L30.600 14.800 L28.800 11.400 L32 11.200Z" fill="#050505" stroke="#9a9a9a" stroke-width="0.7"/><path d="M41 9H53M47 3.5V14.5" stroke="#4e4e4e" stroke-width="2"/></svg>

  <!-- quick save slots -->
  <div class="abs" style="left:3px;top:262px;width:229px;height:22px;background:#393939;border-top:1px solid #4a4a4a;border-bottom:1px solid #222"></div>
  <svg class="abs" style="left:10px;top:267px" width="6" height="10" viewBox="0 0 6 10"><path d="M1 1 L5 5 L1 9Z" fill="#8c8c8c"/></svg>
  <div class="rl wide" id="qss" style="left:19px;top:266px">QUICK SAVE SLOTS</div>
  <div class="abs" style="left:3px;top:284px;width:229px;height:36px;background:#323232"></div>
  <div class="abs" style="left:3px;top:319px;width:229px;height:1px;background:#484848"></div>
  <div class="abs" style="left:3px;top:320px;width:229px;height:20px;background:#383838;border-bottom:1px solid #1c1c1c"></div>
  <svg class="abs" style="left:6px;top:329px" width="10" height="6" viewBox="0 0 10 6"><path d="M0.5 0.8 H9.5 L5 5.6Z" fill="#8c8c8c"/></svg>
  <div class="rl wide" id="loupe" style="left:19px;top:324px">LOUPE</div>
  <div class="abs" style="left:3px;top:340px;width:229px;height:202px;background:#262626"></div>
  <div class="abs" style="left:10px;top:348px;width:218px;height:164px">
<svg width="218" height="164" viewBox="662 378 218 164" style="display:block">
<defs>
  <pattern id="chk2" x="662" y="378" width="16" height="16" patternUnits="userSpaceOnUse"><rect width="16" height="16" fill="#ffffff"/><rect x="8" width="8" height="8" fill="#c2c2c2"/><rect y="8" width="8" height="8" fill="#c2c2c2"/></pattern>
  <linearGradient id="ls" x1="0" y1="0" x2="0" y2="1"><stop offset="0" stop-color="#f9f9fb"/><stop offset="0.55" stop-color="#eeeff5"/><stop offset="0.8" stop-color="#d6dae6"/><stop offset="1" stop-color="#dfe2ea"/></linearGradient>
  <linearGradient id="rs" x1="0" y1="0" x2="0" y2="1"><stop offset="0" stop-color="#f8f9e6"/><stop offset="0.7" stop-color="#f3f5e2"/><stop offset="1" stop-color="#eceee0"/></linearGradient>
  <filter id="lb"><feGaussianBlur stdDeviation="0.6"/></filter>
</defs>
<rect x="662" y="378" width="218" height="164" fill="url(#chk2)"/>
<g filter="url(#lb)">
<path d="M662 420 Q680 411 705 411.500 Q740 413 771.500 418 V491 H662Z" fill="url(#ls)"/>
<path d="M662 420 Q680 411 705 411.500 Q740 413 771.500 418" stroke="#a8acb4" stroke-width="1" fill="none"/>
<path d="M771.500 418 Q800 420 822 434 Q833 441 837.500 442 Q852 424 880 420 V491 H771.500Z" fill="url(#rs)"/>
<path d="M771.500 418 Q800 420 822 434 Q833 441 837.500 442 Q852 424 880 420" stroke="#b0b8b4" stroke-width="1" fill="none"/>
<!-- left bottom textures -->
<rect x="662" y="491" width="9" height="19" fill="#6c6e6a"/><rect x="662" y="511" width="9" height="31" fill="#5c8062"/><rect x="662" y="509" width="9" height="1.800" fill="#dcdcd6"/>
<rect x="670" y="491" width="2" height="51" fill="#d0d4cc"/>
<rect x="672" y="491" width="29" height="51" fill="#5e8463"/><rect x="698" y="491" width="5" height="51" fill="#96a080"/>
<path d="M676 495 l8 20 l-6 22 M688 493 l6 18 l-5 26 M696 500 l-4 30" stroke="#4a6c4e" stroke-width="2" fill="none"/>
<rect x="703" y="491" width="30" height="51" fill="#c9bd9a"/>
<path d="M708 492 v50 M716 492 q-3 25 1 50 M725 492 q3 25 -2 50" stroke="#a89c7a" stroke-width="1.600" fill="none"/>
<rect x="733" y="491" width="38.500" height="51" fill="#7e785a"/>
<path d="M736 498 q12 -6 20 4 q8 8 14 -2 M735 512 q14 6 22 -2 q8 -6 13 4 M737 528 q10 -8 18 0 q8 6 15 -4 M745 492 q4 12 -4 22 M760 500 q-6 14 2 30" stroke="#45411f" stroke-width="2.300" fill="none"/>
<path d="M738 504 q12 -4 18 4 M740 520 q12 4 20 -2 M742 535 q10 -6 20 0" stroke="#cac49e" stroke-width="1.800" fill="none"/>
<!-- right bottom -->
<rect x="771.500" y="490.500" width="108.500" height="51.500" fill="#8a90a0"/>
<rect x="772" y="490.500" width="18" height="51.500" fill="#b8bcc0"/>
<rect x="790" y="490.500" width="25" height="51.500" fill="#d2ceba"/>
<rect x="799" y="490.500" width="2.500" height="51.500" fill="#f0f0ea"/>
<rect x="805" y="516" width="10" height="26" fill="#c4c0a6"/>
<rect x="815" y="490.500" width="43" height="51.500" fill="#5a6888"/>
<path d="M818 500 q6 10 2 22 q-3 10 2 20 M850 500 q-5 12 0 24 q3 10 -2 18" stroke="#8e9ab4" stroke-width="2" fill="none"/>
<rect x="858" y="490.500" width="22" height="51.500" fill="#64728f"/>
<path d="M862 496 q8 4 14 0 M864 508 q6 -4 14 2" stroke="#9aa6bc" stroke-width="1.600" fill="none"/>
<rect x="845" y="518" width="18" height="24" fill="#c6c2a8"/>
<rect x="863" y="516" width="1.500" height="26" fill="#eef0f0"/>
<rect x="845" y="534.500" width="35" height="1.600" fill="#e8eaea"/>
<rect x="866" y="520" width="14" height="13" fill="#44527a"/>
<!-- centre lamp -->
<path d="M826 510 h19 q1 14 -4 32 h-10 q-6 -18 -5 -32z" fill="#141a34"/>
<path d="M830.500 513 q-1 14 1.500 27 M835.500 513 v28 M840.500 513 q1 14 -1.500 27" stroke="#dfe4ee" stroke-width="1.400" fill="none"/>
<path d="M825 504.500 h19 M824.500 508.800 h21" stroke="#f2f4f6" stroke-width="2"/>
<path d="M826 506.600 h18" stroke="#141a34" stroke-width="1.600"/>
<!-- left lamp -->
<path d="M774 496 h16 q-1 10 -4 20 l-0.500 26 h-6.500 l-1 -26 q-4 -10 -4 -20z" fill="#19213c"/>
<path d="M778 500 q1 14 3 24 l0.500 16" stroke="#5c6c94" stroke-width="1.600" fill="none"/>
<path d="M774.500 490.500 h15.500 l-1 6.500 h-13.500z" fill="#f0f2f4"/>
<path d="M778 490.500 v6 M782 490.500 v6.500 M786 490.500 v6" stroke="#1a2240" stroke-width="1.300"/>
<!-- band -->
<path d="M790 514.500 Q798 518.500 805 515 Q811 511 815.500 498 Q821 490.500 834.500 490.500 Q849 490.500 857.500 504 Q862 514 868 516 Q874 518 880 516.500" stroke="#10162e" stroke-width="5.500" fill="none"/>
<path d="M790 511 Q798 515 805 511.500 Q811 507.500 815.500 495 Q821 487.500 834.500 487.500 Q849 487.500 857.500 501 Q862 511 868 513 Q874 515 880 513.500" stroke="#f5f6f4" stroke-width="4.200" fill="none"/>
<rect x="662" y="490" width="109" height="1.500" fill="#b8bcc4"/>
</g>
<rect x="771" y="378" width="1.600" height="164" fill="#e8141c"/>
</svg>

  </div>
  <div class="abs" style="left:12px;top:515px;width:23px;height:17px;background:linear-gradient(#484848,#343434);border:1px solid #1a1a1a;border-radius:2px"></div>
  <svg class="abs" style="left:12px;top:515px" width="23" height="17" viewBox="0 0 23 17"><path d="M9 4 L13 5.5 L12.5 7.5 L16 8 L12.5 10 L13.5 13.5 L10.5 10.5 L7.5 12 L9.5 8.5 L7.5 7Z" fill="#9a9a9a"/></svg>
</div>

<!-- BOTTOM BAR -->
<div id="bottom" class="abs">
  <div class="btn" style="left:-4px;width:68px;padding-left:1px"><span style="letter-spacing:0.6px;transform:scaleX(1.17)">HELP</span></div>
  <div class="btn" style="left:66px;width:100px"><span style="letter-spacing:0.7px;transform:scaleX(1.17)">SETTINGS</span></div>
  <div class="btn" style="left:688px;width:86px"><span style="letter-spacing:0.6px;transform:scaleX(1.15)">CANCEL</span></div>
  <div class="btn" style="left:776px;width:87px;top:5px;height:26px;border:2px solid #b4b4b4;border-radius:4px;color:#d2d2d2;font-weight:bold;line-height:21px"><span style="letter-spacing:0.6px;transform:scaleX(1.15)">OK</span></div>
  <svg class="abs" style="left:868px;top:22px" width="16" height="16" viewBox="868 594 16 16"><g fill="#151515"><rect x="881" y="596" width="2.2" height="2.2"/><rect x="877" y="600" width="2.2" height="2.2"/><rect x="881" y="600" width="2.2" height="2.2"/><rect x="873" y="604" width="2.2" height="2.2"/><rect x="877" y="604" width="2.2" height="2.2"/><rect x="881" y="604" width="2.2" height="2.2"/></g><g fill="#4a4a4a"><rect x="882.500" y="598" width="1.500" height="1.500"/><rect x="878.500" y="602" width="1.500" height="1.500"/><rect x="882.500" y="602" width="1.500" height="1.500"/><rect x="874.500" y="606" width="1.500" height="1.500"/><rect x="878.500" y="606" width="1.500" height="1.500"/><rect x="882.500" y="606" width="1.500" height="1.500"/></g></svg>
</div>

</div>

</body></html>
